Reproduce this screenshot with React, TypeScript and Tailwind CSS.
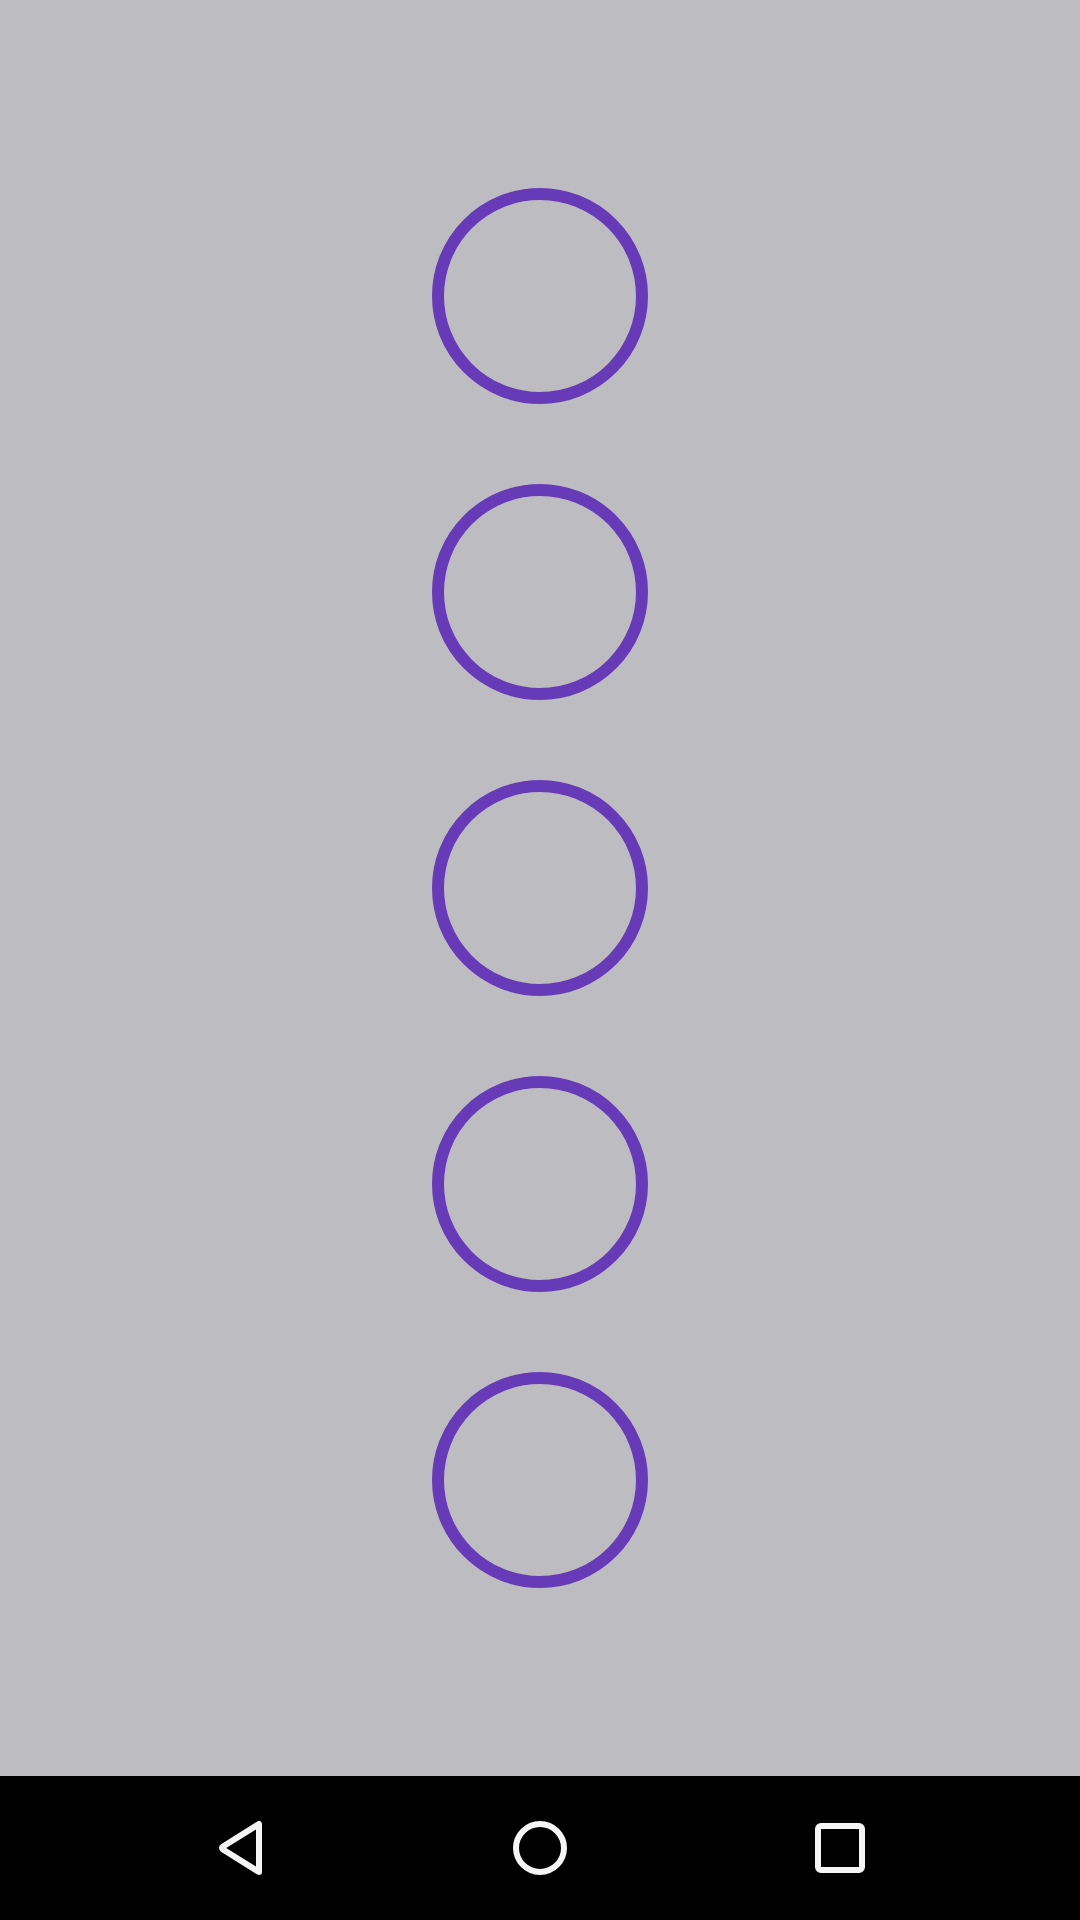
const RINGS = [0, 1, 2, 3, 4];

function BackIcon() {
  return (
    <svg width="56" height="60" viewBox="0 0 56 60" fill="none">
      <path
        d="M47 6 L47 54 L11 31.5 Q9 30 11 28.5 Z"
        stroke="#f5f5f5"
        strokeWidth="6"
        strokeLinejoin="round"
      />
    </svg>
  );
}

function HomeIcon() {
  return (
    <svg width="60" height="60" viewBox="0 0 60 60" fill="none">
      <circle cx="30" cy="30" r="24" stroke="#f5f5f5" strokeWidth="6" />
    </svg>
  );
}

function RecentsIcon() {
  return (
    <svg width="56" height="56" viewBox="0 0 56 56" fill="none">
      <rect x="6" y="6" width="44" height="44" rx="3" stroke="#f5f5f5" strokeWidth="6" />
    </svg>
  );
}

export default function App() {
  return (
    <div className="w-[1080px] h-[1920px] flex flex-col bg-black">
      {/* ring stack */}
      <div className="h-[1776px] bg-[#bdbcc0] flex flex-col items-center pt-[188px] gap-[80px]">
        {RINGS.map(i => (
          <div
            key={i}
            className="w-[216px] h-[216px] rounded-full border-[12px] border-[#673ab7] shrink-0"
          />
        ))}
      </div>

      {/* system nav bar */}
      <div className="h-[144px] bg-black flex items-center justify-center">
        <div className="w-[300px] flex justify-center">
          <BackIcon />
        </div>
        <div className="w-[300px] flex justify-center">
          <HomeIcon />
        </div>
        <div className="w-[300px] flex justify-center">
          <RecentsIcon />
        </div>
      </div>
    </div>
  );
}
